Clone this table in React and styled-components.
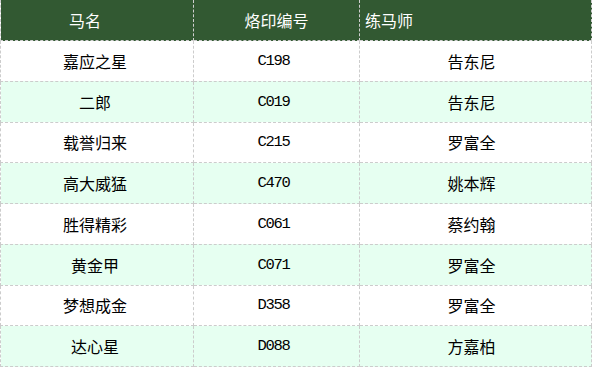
import React from "react";
import styled, { createGlobalStyle } from "styled-components";

const horses = [
  { name: "嘉应之星", code: "C198", trainer: "告东尼" },
  { name: "二郎", code: "C019", trainer: "告东尼" },
  { name: "载誉归来", code: "C215", trainer: "罗富全" },
  { name: "高大威猛", code: "C470", trainer: "姚本辉" },
  { name: "胜得精彩", code: "C061", trainer: "蔡约翰" },
  { name: "黄金甲", code: "C071", trainer: "罗富全" },
  { name: "梦想成金", code: "D358", trainer: "罗富全" },
  { name: "达心星", code: "D088", trainer: "方嘉柏" },
];

const GlobalStyle = createGlobalStyle`
  body {
    margin: 0;
    background: #fff;
    font-family: "Noto Sans CJK SC", "Noto Sans", sans-serif;
  }
`;

const Table = styled.table`
  width: 591px;
  border-collapse: collapse;
  table-layout: fixed;
  font-size: 16px;
  color: #000;
`;

const HeadCell = styled.th`
  height: 40px;
  padding: 0 ${(p) => (p.$shift ? p.$shift : 0)}px 0 ${(p) => (p.$left ? 5 : 0)}px;
  background: #325932;
  color: #fff;
  font-weight: normal;
  text-align: ${(p) => (p.$left ? "left" : "center")};
  border: 1px dashed #cfcfcf;
  border-top: none;
  line-height: 20px;
`;

const Row = styled.tr`
  height: 40.75px;
  background: ${(p) => (p.$alt ? "#e6fff1" : "#fff")};
`;

const Cell = styled.td`
  padding: 0 ${(p) => p.$pad || 0}px 0 0;
  text-align: center;
  border: 1px dashed #cccccc;
  line-height: 20px;
  font-family: ${(p) =>
    p.$mono
      ? '"Liberation Mono", "DejaVu Sans Mono", monospace'
      : '"Noto Sans CJK SC", "Noto Sans", sans-serif'};
  font-size: ${(p) => (p.$mono ? "15.5px" : "16px")};
  letter-spacing: ${(p) => (p.$mono ? "-1.3px" : "0")};
`;

export default function App() {
  return (
    <>
      <GlobalStyle />
      <Table>
        <colgroup>
          <col style={{ width: 193 }} />
          <col style={{ width: 166 }} />
          <col style={{ width: 232 }} />
        </colgroup>
        <thead>
          <tr>
            <HeadCell $shift={24}>马名</HeadCell>
            <HeadCell>烙印编号</HeadCell>
            <HeadCell $left>练马师</HeadCell>
          </tr>
        </thead>
        <tbody>
          {horses.map((h, i) => (
            <Row key={h.code} $alt={i % 2 === 1}>
              <Cell $pad={4}>{h.name}</Cell>
              <Cell $mono $pad={6}>{h.code}</Cell>
              <Cell $pad={8}>{h.trainer}</Cell>
            </Row>
          ))}
        </tbody>
      </Table>
    </>
  );
}
